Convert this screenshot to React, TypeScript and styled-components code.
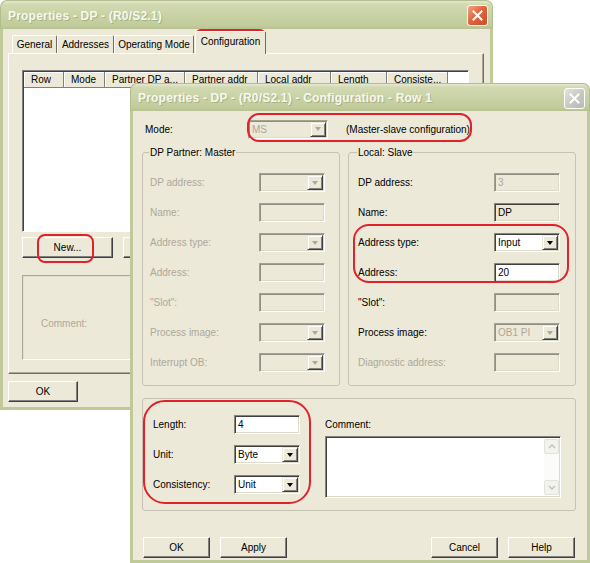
import React from "react";
import styled, { createGlobalStyle } from "styled-components";

const GlobalStyle = createGlobalStyle`
  html, body { margin: 0; padding: 0; background: #ffffff; }
  body {
    font-family: "Liberation Sans", Arial, sans-serif;
    font-size: 10px;
    color: #000;
  }
`;

const FACE = "#ece9d8";
const MUTED = "#aca899";

const Desktop = styled.div`
  position: relative;
  width: 590px;
  height: 563px;
  overflow: hidden;
  background: #fff;
`;

const Window = styled.section<{ $x: number; $y: number; $w: number; $h: number }>`
  position: absolute;
  left: ${(p) => p.$x}px;
  top: ${(p) => p.$y}px;
  width: ${(p) => p.$w}px;
  height: ${(p) => p.$h}px;
  display: flex;
  flex-direction: column;
`;

const TitleBar = styled.header<{ $h: number }>`
  flex: none;
  height: ${(p) => p.$h}px;
  box-sizing: border-box;
  display: flex;
  align-items: center;
  justify-content: space-between;
  padding: 1px 4px 0 7px;
  border-radius: 7px 7px 0 0;
  border: 1px solid #b3be8e;
  border-bottom: none;
  background: linear-gradient(180deg, #e4eacd 0%, #d2d9b2 12%, #c9d2a4 50%, #c1cb9b 88%, #b8c290 100%);
  color: #f7f8ee;
  font-weight: bold;
  font-size: 12px;
  letter-spacing: 0.2px;
  text-shadow: 1px 1px 0 rgba(130, 140, 95, 0.45);
  white-space: nowrap;
`;

const CloseButton = styled.div<{ $active?: boolean }>`
  width: 21px;
  height: 21px;
  box-sizing: border-box;
  border: 1px solid #fff;
  border-radius: 3px;
  background: ${(p) =>
    p.$active
      ? "linear-gradient(135deg, #f2a585 0%, #e2653f 45%, #c94b2a 100%)"
      : "linear-gradient(135deg, #e2e4dc 0%, #c9cbc2 50%, #b7b9b0 100%)"};
  display: flex;
  align-items: center;
  justify-content: center;
`;

const Frame = styled.div<{ $pad: string }>`
  flex: 1;
  min-height: 0;
  display: flex;
  flex-direction: column;
  box-sizing: border-box;
  padding: ${(p) => p.$pad};
  background: ${FACE};
  border: 3px solid #bfc999;
  border-top: none;
`;

/* ---------- back window ---------- */

const TabStrip = styled.div`
  flex: none;
  display: flex;
  align-items: flex-end;
  height: 24px;
  padding-left: 9px;
  position: relative;
  z-index: 1;
`;

const Tab = styled.div<{ $w: number; $selected?: boolean }>`
  width: ${(p) => p.$w}px;
  flex: none;
  box-sizing: border-box;
  height: ${(p) => (p.$selected ? 23 : 18)}px;
  margin: ${(p) => (p.$selected ? "0 -1px -1px 1px" : "0")};
  padding-bottom: ${(p) => (p.$selected ? 3 : 0)}px;
  display: flex;
  align-items: center;
  justify-content: center;
  border: 1px solid;
  border-bottom: none;
  border-color: #fff #716f64 transparent #fff;
  border-radius: 2px 2px 0 0;
  background: ${FACE};
  white-space: nowrap;
`;

const TabPanel = styled.div`
  flex: none;
  margin: 0 6px 0 5px;
  height: 321px;
  box-sizing: border-box;
  border: 1px solid;
  border-color: #fff #716f64 #716f64 #fff;
  box-shadow: inset -1px -1px 0 #aca899;
  padding: 16px 14px 0 13px;
  display: flex;
  flex-direction: column;
`;

const ListView = styled.div`
  height: 162px;
  box-sizing: border-box;
  border: 1px solid;
  border-color: #808080 #fff #fff #808080;
  box-shadow: inset 1px 1px 0 #404040;
  background: #fff;
  padding: 1px 0 0 1px;
`;

const ListHeader = styled.div`
  display: flex;
  height: 16px;
`;

const HeaderCell = styled.div<{ $w: number }>`
  width: ${(p) => p.$w}px;
  flex: none;
  box-sizing: border-box;
  padding-left: 7px;
  display: flex;
  align-items: center;
  background: ${FACE};
  border-right: 1px solid #808080;
  border-bottom: 1px solid #808080;
  box-shadow: inset 1px 1px 0 #fff;
  white-space: nowrap;
  overflow: hidden;
`;

const ButtonRow = styled.div<{ $gap: number; $top: number }>`
  display: flex;
  gap: ${(p) => p.$gap}px;
  margin-top: ${(p) => p.$top}px;
`;

const PushButton = styled.div<{ $w: number }>`
  width: ${(p) => p.$w}px;
  height: 21px;
  flex: none;
  box-sizing: border-box;
  display: flex;
  align-items: center;
  justify-content: center;
  background: ${FACE};
  border: 1px solid;
  border-color: #fff #404040 #404040 #fff;
  box-shadow: inset -1px -1px 0 #808080;
`;

const CommentPanel = styled.div`
  margin-top: 17px;
  height: 85px;
  box-sizing: border-box;
  border: 1px solid;
  border-color: #aca899 #fff #fff #aca899;
  box-shadow: inset 1px 1px 0 #e0ded0;
  display: flex;
  align-items: center;
  padding: 12px 0 0 18px;
  color: ${MUTED};
`;

const BottomBar = styled.div`
  display: flex;
  padding: 7px 0 0 5px;
`;

/* ---------- controls ---------- */

const Label = styled.span<{ $muted?: boolean }>`
  color: ${(p) => (p.$muted ? MUTED : "#000")};
  white-space: nowrap;
`;

const Field = styled.div<{ $w: number; $h?: number; $white?: boolean; $soft?: boolean; $muted?: boolean }>`
  width: ${(p) => p.$w}px;
  height: ${(p) => p.$h ?? 19}px;
  box-sizing: border-box;
  display: flex;
  align-items: center;
  padding: 1px;
  border: 1px solid;
  border-color: ${(p) => (p.$soft ? "#a3a194 #fff #fff #a3a194" : "#848479 #fff #fff #848479")};
  box-shadow: inset 1px 1px 0 ${(p) => (p.$soft ? "#8f8e84" : "#404040")}, inset -1px -1px 0 #dcdacb;
  background: ${(p) => (p.$white ? "#fff" : FACE)};
  color: ${(p) => (p.$muted ? MUTED : "#000")};
`;

const FieldText = styled.span`
  padding-left: 2px;
  white-space: nowrap;
`;

const DropButton = styled.div<{ $disabled?: boolean }>`
  width: 16px;
  align-self: stretch;
  margin-left: auto;
  box-sizing: border-box;
  background: ${FACE};
  border: 1px solid;
  border-color: ${FACE} #404040 #404040 ${FACE};
  box-shadow: inset 1px 1px 0 #fff, inset -1px -1px 0 #808080;
  display: flex;
  align-items: center;
  justify-content: center;
  &::after {
    content: "";
    border-left: 3.5px solid transparent;
    border-right: 3.5px solid transparent;
    border-top: 4px solid ${(p) => (p.$disabled ? MUTED : "#000")};
  }
`;

type Ctl = {
  kind: "text" | "combo";
  value?: string;
  white?: boolean;
  disabled?: boolean;
  muted?: boolean;
};

function Control({ c, w = 66 }: { c: Ctl; w?: number }) {
  return (
    <Field $w={w} $white={c.white} $soft={c.disabled} $muted={c.muted || c.disabled}>
      <FieldText>{c.value ?? ""}</FieldText>
      {c.kind === "combo" && <DropButton $disabled={c.disabled} />}
    </Field>
  );
}

/* ---------- front window ---------- */

const ModeRow = styled.div`
  display: flex;
  align-items: center;
  height: 18px;
`;

const ModeLabel = styled.span`
  width: 106px;
  padding-left: 3px;
  box-sizing: border-box;
`;

const ModeNote = styled.span`
  margin-left: 18px;
  white-space: nowrap;
`;

const GroupRow = styled.div`
  display: flex;
  gap: 8px;
  margin-top: 8px;
`;

const GroupBox = styled.fieldset<{ $w: number; $padLeft: number }>`
  width: ${(p) => p.$w}px;
  height: 240px;
  box-sizing: border-box;
  margin: 0;
  padding: 0 0 0 ${(p) => p.$padLeft}px;
  border: 1px solid #c6c3b3;
  border-radius: 3px;
`;

const GroupTitle = styled.legend`
  padding: 0 1px;
  margin-left: -1px;
  line-height: 13px;
  font-size: 10px;
`;

const FormGrid = styled.div<{ $label: number; $top: number }>`
  display: grid;
  grid-template-columns: ${(p) => p.$label}px auto;
  grid-auto-rows: 19px;
  row-gap: 11px;
  align-items: center;
  padding-top: ${(p) => p.$top}px;
`;

const LowerGroup = styled.div`
  margin-top: 12px;
  height: 113px;
  box-sizing: border-box;
  border: 1px solid #c6c3b3;
  border-radius: 3px;
  display: flex;
  padding: 0 0 0 10px;
`;

const CommentColumn = styled.div`
  margin-left: 25px;
  padding-top: 16px;
  display: flex;
  flex-direction: column;
`;

const CommentLabel = styled.span`
  line-height: 19px;
`;

const TextArea = styled.div`
  margin-top: 2px;
  width: 236px;
  height: 62px;
  box-sizing: border-box;
  border: 1px solid;
  border-color: #848479 #fff #fff #848479;
  box-shadow: inset 1px 1px 0 #404040, inset -1px -1px 0 #dcdacb;
  background: #fff;
  display: flex;
  justify-content: flex-end;
  padding: 2px 1px 2px 0;
`;

const ScrollBar = styled.div`
  width: 15px;
  display: flex;
  flex-direction: column;
  justify-content: space-between;
  background: #fbfbf9;
`;

const ScrollArrow = styled.div`
  height: 15px;
  box-sizing: border-box;
  border: 1px solid #e4e3da;
  border-radius: 2px;
  background: #f3f3ee;
  display: flex;
  align-items: center;
  justify-content: center;
`;

const DialogButtons = styled.div`
  display: flex;
  justify-content: space-between;
  margin-top: 26px;
  padding: 0 1px 0 1px;
`;

const ButtonGroup = styled.div`
  display: flex;
  gap: 10px;
`;

/* ---------- annotations ---------- */

const Mark = styled.div<{ $x: number; $y: number; $w: number; $h: number; $r: number }>`
  position: absolute;
  left: ${(p) => p.$x}px;
  top: ${(p) => p.$y}px;
  width: ${(p) => p.$w}px;
  height: ${(p) => p.$h}px;
  box-sizing: border-box;
  border: 2px solid #e0222a;
  border-radius: ${(p) => p.$r}px;
  pointer-events: none;
`;

function XGlyph() {
  return (
    <svg width="11" height="11" viewBox="0 0 11 11">
      <path d="M1.5 1.5 L9.5 9.5 M9.5 1.5 L1.5 9.5" stroke="#fff" strokeWidth="2" strokeLinecap="square" />
    </svg>
  );
}

function Chevron({ up }: { up?: boolean }) {
  return (
    <svg width="8" height="5" viewBox="0 0 8 5">
      <path d={up ? "M1 4 L4 1 L7 4" : "M1 1 L4 4 L7 1"} stroke="#c2c4bc" strokeWidth="1.5" fill="none" />
    </svg>
  );
}

const tabs = [
  { label: "General", w: 45 },
  { label: "Addresses", w: 57 },
  { label: "Operating Mode", w: 80 },
  { label: "Configuration", w: 71, selected: true },
];

const columns = [
  { label: "Row", w: 40 },
  { label: "Mode", w: 41 },
  { label: "Partner DP a...", w: 80 },
  { label: "Partner addr", w: 73 },
  { label: "Local addr", w: 73 },
  { label: "Length", w: 56 },
  { label: "Consiste...", w: 61 },
];

type Row = { label: string; muted?: boolean; c: Ctl };

const partnerRows: Row[] = [
  { label: "DP address:", muted: true, c: { kind: "combo", disabled: true } },
  { label: "Name:", muted: true, c: { kind: "text", disabled: true } },
  { label: "Address type:", muted: true, c: { kind: "combo", disabled: true } },
  { label: "Address:", muted: true, c: { kind: "text", disabled: true } },
  { label: "\"Slot\":", muted: true, c: { kind: "text", disabled: true } },
  { label: "Process image:", muted: true, c: { kind: "combo", disabled: true } },
  { label: "Interrupt OB:", muted: true, c: { kind: "combo", disabled: true } },
];

const localRows: Row[] = [
  { label: "DP address:", c: { kind: "text", value: "3", disabled: true } },
  { label: "Name:", c: { kind: "text", value: "DP" } },
  { label: "Address type:", c: { kind: "combo", value: "Input", white: true } },
  { label: "Address:", c: { kind: "text", value: "20", white: true } },
  { label: "\"Slot\":", c: { kind: "text", disabled: true } },
  { label: "Process image:", c: { kind: "combo", value: "OB1 PI", disabled: true } },
  { label: "Diagnostic address:", muted: true, c: { kind: "text", disabled: true } },
];

const lengthRows: Row[] = [
  { label: "Length:", c: { kind: "text", value: "4", white: true } },
  { label: "Unit:", c: { kind: "combo", value: "Byte", white: true } },
  { label: "Consistency:", c: { kind: "combo", value: "Unit", white: true } },
];

function Rows({ rows }: { rows: Row[] }) {
  return (
    <>
      {rows.map((r, i) => (
        <React.Fragment key={i}>
          <Label $muted={r.muted}>{r.label}</Label>
          <Control c={r.c} />
        </React.Fragment>
      ))}
    </>
  );
}

export default function App() {
  return (
    <>
      <GlobalStyle />
      <Desktop>
        {/* Back window: Properties - DP */}
        <Window $x={0} $y={0} $w={493} $h={410}>
          <TitleBar $h={29}>
            <span>Properties - DP - (R0/S2.1)</span>
            <CloseButton $active>
              <XGlyph />
            </CloseButton>
          </TitleBar>
          <Frame $pad="0">
            <TabStrip>
              {tabs.map((t) => (
                <Tab key={t.label} $w={t.w} $selected={t.selected}>
                  {t.label}
                </Tab>
              ))}
            </TabStrip>
            <TabPanel>
              <ListView>
                <ListHeader>
                  {columns.map((c) => (
                    <HeaderCell key={c.label} $w={c.w}>
                      {c.label}
                    </HeaderCell>
                  ))}
                </ListHeader>
              </ListView>
              <ButtonRow $gap={10} $top={5}>
                <PushButton $w={91}>New...</PushButton>
                <PushButton $w={91} />
              </ButtonRow>
              <CommentPanel>Comment:</CommentPanel>
            </TabPanel>
            <BottomBar>
              <PushButton $w={70}>OK</PushButton>
            </BottomBar>
          </Frame>
        </Window>

        {/* Front window: Configuration - Row 1 */}
        <Window $x={130} $y={83} $w={460} $h={480}>
          <TitleBar $h={28}>
            <span>Properties - DP - (R0/S2.1) - Configuration - Row 1</span>
            <CloseButton>
              <XGlyph />
            </CloseButton>
          </TitleBar>
          <Frame $pad="9px 11px 0 9px">
            <ModeRow>
              <ModeLabel>Mode:</ModeLabel>
              <Control c={{ kind: "combo", value: "MS", disabled: true }} w={80} />
              <ModeNote>(Master-slave configuration)</ModeNote>
            </ModeRow>

            <GroupRow>
              <GroupBox $w={198} $padLeft={7}>
                <GroupTitle>DP Partner: Master</GroupTitle>
                <FormGrid $label={109} $top={14}>
                  <Rows rows={partnerRows} />
                </FormGrid>
              </GroupBox>
              <GroupBox $w={228} $padLeft={9}>
                <GroupTitle>Local: Slave</GroupTitle>
                <FormGrid $label={136} $top={14}>
                  <Rows rows={localRows} />
                </FormGrid>
              </GroupBox>
            </GroupRow>

            <LowerGroup>
              <FormGrid $label={81} $top={16}>
                <Rows rows={lengthRows} />
              </FormGrid>
              <CommentColumn>
                <CommentLabel>Comment:</CommentLabel>
                <TextArea>
                  <ScrollBar>
                    <ScrollArrow>
                      <Chevron up />
                    </ScrollArrow>
                    <ScrollArrow>
                      <Chevron />
                    </ScrollArrow>
                  </ScrollBar>
                </TextArea>
              </CommentColumn>
            </LowerGroup>

            <DialogButtons>
              <ButtonGroup>
                <PushButton $w={67}>OK</PushButton>
                <PushButton $w={67}>Apply</PushButton>
              </ButtonGroup>
              <ButtonGroup>
                <PushButton $w={67}>Cancel</PushButton>
                <PushButton $w={67}>Help</PushButton>
              </ButtonGroup>
            </DialogButtons>
          </Frame>
        </Window>

        {/* Red annotation outlines */}
        <Mark $x={195} $y={29} $w={71} $h={25} $r={6} />
        <Mark $x={37} $y={234} $w={57} $h={29} $r={8} />
        <Mark $x={247} $y={113} $w={225} $h={29} $r={12} />
        <Mark $x={353} $y={224} $w={216} $h={59} $r={16} />
        <Mark $x={143} $y={400} $w={168} $h={104} $r={22} />
      </Desktop>
    </>
  );
}
